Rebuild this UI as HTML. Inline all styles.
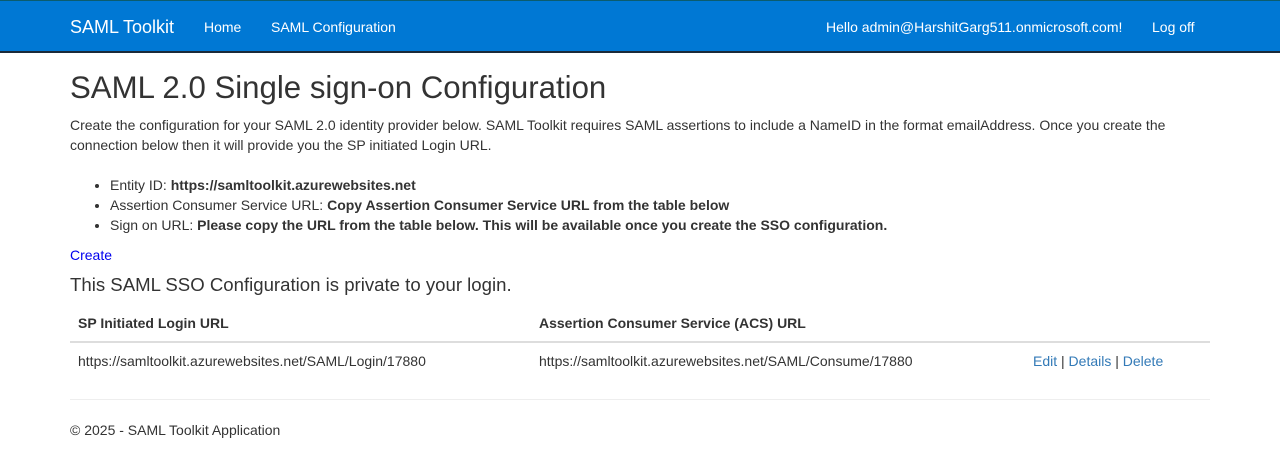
<!DOCTYPE html>
<html><head><style>
body{margin:0;font-family:"Liberation Sans",Arial,sans-serif;font-size:14px;color:#333;background:#fff;width:1280px;height:464px;overflow:hidden;position:relative}
.nav{position:absolute;left:0;top:0;width:1280px;height:53px;background:#0078d4;border-top:1px solid #0b5c6e;border-bottom:2px solid #1a2a3a;box-sizing:border-box;color:#fff}
.nav span{position:absolute;top:1px;line-height:50px;white-space:nowrap}
.a{position:absolute;white-space:nowrap}
a{color:#0000ee;text-decoration:none}
.l{color:#337ab7}
ul{margin:0;padding:0 0 0 40px}
</style></head><body>
<div class="nav">
<span style="left:70px;font-size:18px">SAML Toolkit</span>
<span style="left:204px">Home</span>
<span style="left:271px">SAML Configuration</span>
<span style="left:826px">Hello admin@HarshitGarg511.onmicrosoft.com!</span>
<span style="left:1152px">Log off</span>
</div>
<div class="a" style="left:70px;top:70px;font-size:31.2px;line-height:36px;font-weight:500">SAML 2.0 Single sign-on Configuration</div>
<div class="a" style="left:70px;top:115px;line-height:20px;white-space:normal;width:1140px">Create the configuration for your SAML 2.0 identity provider below. SAML Toolkit requires SAML assertions to include a NameID in the format emailAddress. Once you create the connection below then it will provide you the SP initiated Login URL.</div>
<div class="a" style="left:70px;top:175px;line-height:20px"><ul>
<li>Entity ID: <b>https://samltoolkit.azurewebsites.net</b></li>
<li>Assertion Consumer Service URL: <b>Copy Assertion Consumer Service URL from the table below</b></li>
<li>Sign on URL: <b>Please copy the URL from the table below. This will be available once you create the SSO configuration.</b></li></ul></div>
<div class="a" style="left:70px;top:245px;line-height:20px"><a>Create</a></div>
<div class="a" style="left:70px;top:274px;font-size:18.6px;line-height:22px">This SAML SSO Configuration is private to your login.</div>
<div class="a" style="left:78px;top:313px;line-height:20px;font-weight:bold">SP Initiated Login URL</div>
<div class="a" style="left:539px;top:313px;line-height:20px;font-weight:bold">Assertion Consumer Service (ACS) URL</div>
<div class="a" style="left:70px;top:341px;width:1140px;height:2px;background:#ddd"></div>
<div class="a" style="left:78px;top:351px;line-height:20px">https://samltoolkit.azurewebsites.net/SAML/Login/17880</div>
<div class="a" style="left:539px;top:351px;line-height:20px">https://samltoolkit.azurewebsites.net/SAML/Consume/17880</div>
<div class="a" style="left:1033px;top:351px;line-height:20px"><span class="l">Edit</span> | <span class="l">Details</span> | <span class="l">Delete</span></div>
<div class="a" style="left:70px;top:399px;width:1140px;height:1px;background:#eee"></div>
<div class="a" style="left:70px;top:420px;line-height:20px">© 2025 - SAML Toolkit Application</div>
</body></html>
